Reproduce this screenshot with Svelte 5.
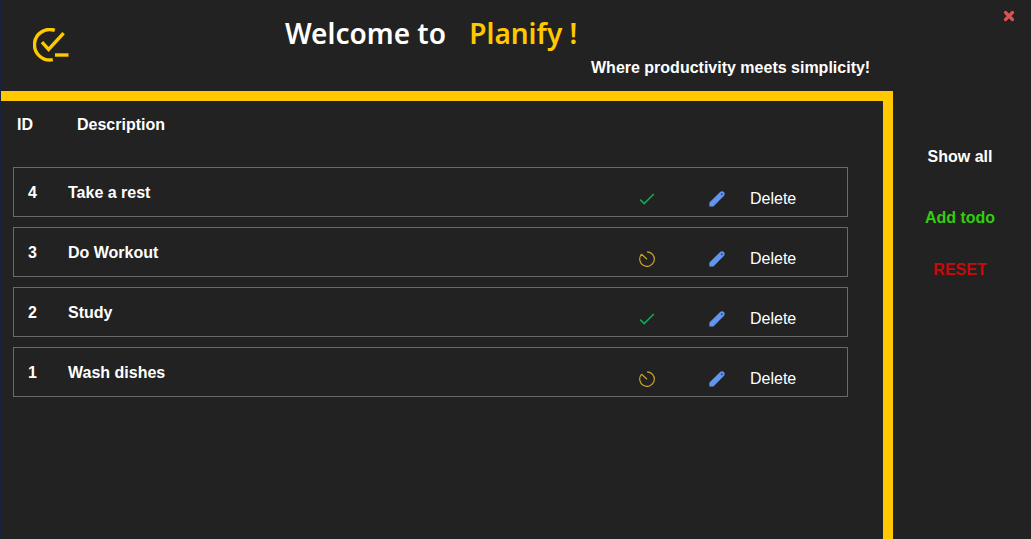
<script>
  let todos = $state([
    { id: 4, text: 'Take a rest', done: true },
    { id: 3, text: 'Do Workout', done: false },
    { id: 2, text: 'Study', done: true },
    { id: 1, text: 'Wash dishes', done: false }
  ]);

  function remove(id) {
    todos = todos.filter((todo) => todo.id !== id);
  }
</script>

<div class="window">
  <header>
    <svg class="logo" viewBox="0 0 36 34" aria-hidden="true">
      <path d="M21.8 2.4A15.2 15.2 0 1 0 19.8 31.6" />
      <path d="M9 14.2L15.6 21.4L30.6 5.2" />
      <path d="M22 27H35.5" />
    </svg>
    <h1>Welcome to <span>Planify !</span></h1>
    <p>Where productivity meets simplicity!</p>
    <button class="close" aria-label="Close">
      <svg viewBox="0 0 12 12"><path d="M2.5 2.5L9.5 9.5M9.5 2.5L2.5 9.5" /></svg>
    </button>
  </header>

  <div class="body">
    <main>
      <table>
        <thead>
          <tr>
            <th scope="col">ID</th>
            <th scope="col">Description</th>
          </tr>
        </thead>
        <tbody>
          {#each todos as todo (todo.id)}
            <tr>
              <td>{todo.id}</td>
              <td>{todo.text}</td>
              <td class="action">
                <button aria-label={todo.done ? 'Done' : 'Pending'} onclick={() => (todo.done = !todo.done)}>
                  {#if todo.done}
                    <svg class="done" viewBox="0 0 16 16"><path d="M1.2 8.6L5.2 12.6L14.8 3" /></svg>
                  {:else}
                    <svg class="pending" viewBox="0 0 16 16">
                      <path d="M8 .8A7.3 7.3 0 1 1 2.6 3.2M2.6 3.2L8 8.2" />
                    </svg>
                  {/if}
                </button>
              </td>
              <td class="action">
                <button aria-label="Edit">
                  <svg class="edit" viewBox="0 0 16 16">
                    <path d="M.4 15.6V11.6L10.9 1.2Q13-.5 14.9 1.1Q16.5 3 14.8 5.1L4.4 15.6Z" />
                    <circle cx="12.8" cy="3.2" r="1" />
                  </svg>
                </button>
              </td>
              <td class="action">
                <button onclick={() => remove(todo.id)}>Delete</button>
              </td>
            </tr>
          {/each}
        </tbody>
      </table>
    </main>

    <nav>
      <button>Show all</button>
      <button class="add">Add todo</button>
      <button class="reset">RESET</button>
    </nav>
  </div>
</div>

<style>
  :global(body) {
    margin: 0;
    background: #222;
  }

  .window {
    box-sizing: border-box;
    min-height: 100vh;
    display: flex;
    flex-direction: column;
    border-left: 1px solid #17213f;
    background: #222;
    color: #fff;
    font: 16px/20px "Liberation Sans", Arial, sans-serif;
  }

  button {
    padding: 0;
    border: 0;
    background: none;
    color: inherit;
    font: inherit;
    cursor: pointer;
  }

  svg {
    display: block;
    fill: none;
  }

  header {
    display: grid;
    grid-template-columns: 252px 306px 1fr 12px;
    align-items: start;
    box-sizing: border-box;
    height: 91px;
    padding: 10px 16px 0 32px;
  }

  .logo {
    width: 36px;
    height: 34px;
    margin-top: 18px;
    stroke: #ffc800;
    stroke-width: 3.4;
  }

  h1 {
    margin: 3px 0 0;
    white-space: nowrap;
    font: 600 28px/40px "Noto Sans", "Open Sans", sans-serif;
  }

  h1 span {
    margin-left: 16px;
    color: #ffc800;
  }

  p {
    margin: 48px 0 0;
    font-weight: bold;
  }

  .close svg {
    width: 12px;
    height: 12px;
    stroke: #d9534f;
    stroke-width: 3.2;
    stroke-linecap: round;
  }

  .body {
    flex: 1;
    display: grid;
    grid-template-columns: 1fr 138px;
  }

  main {
    padding: 14px 35px 0 12px;
    border-top: 10px solid #ffc800;
    border-right: 10px solid #ffc800;
  }

  table,
  thead {
    display: block;
  }

  tbody {
    display: flex;
    flex-direction: column;
    gap: 10px;
    margin-top: 32px;
  }

  tr {
    display: grid;
    align-items: center;
    font-weight: bold;
  }

  thead tr {
    grid-template-columns: 60px 1fr;
    padding-left: 4px;
  }

  tbody tr {
    grid-template-columns: 40px 1fr 70px 41px 47px;
    box-sizing: border-box;
    height: 50px;
    padding: 2px 50px 0 14px;
    border: 1px solid #6a6a6a;
  }

  th,
  td {
    padding: 0;
    text-align: left;
  }

  .action {
    padding-top: 12px;
    font-weight: normal;
  }

  .action button {
    display: block;
  }

  .action svg {
    width: 16px;
    height: 16px;
  }

  .done {
    stroke: #18a558;
    stroke-width: 1.6;
  }

  .pending {
    stroke: #c9a227;
    stroke-width: 1.2;
  }

  .edit {
    fill: #6495ed;
  }

  .edit circle {
    fill: #2c4a85;
  }

  nav {
    display: flex;
    flex-direction: column;
    align-items: center;
    padding: 56px 4px 0 0;
  }

  nav button {
    font-weight: bold;
  }

  .add {
    margin-top: 41px;
    color: #32cd0f;
  }

  .reset {
    margin-top: 32px;
    color: #c80a0a;
  }
</style>
